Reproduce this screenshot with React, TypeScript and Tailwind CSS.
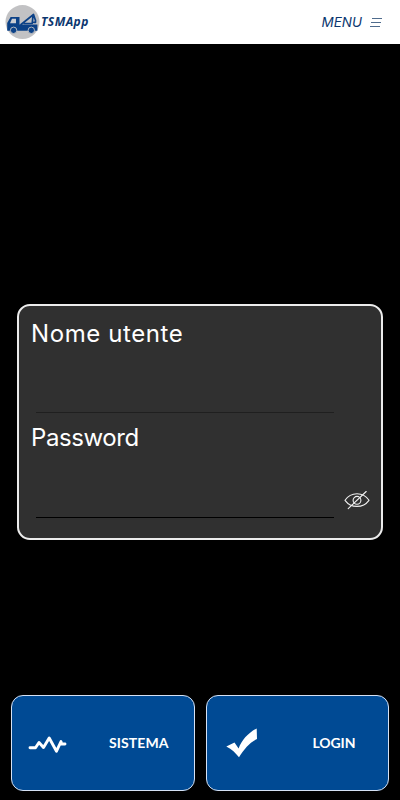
import React from "react";

const TruckLogo: React.FC = () => (
  <svg className="w-[35px] h-[35px] shrink-0" viewBox="0 0 35 35">
    <circle cx="17.5" cy="17.1" r="17" fill="#c2c2c4" />
    <g fill="#0b4187">
      <path d="M5.6 12H14.5V19.500H32.400V25.800H2.200V18z" />
      <circle cx="8.600" cy="25.300" r="3.200" stroke="#c2c2c4" strokeWidth="0.900" />
      <circle cx="26.300" cy="25.300" r="3.200" stroke="#c2c2c4" strokeWidth="0.900" />
    </g>
    <path d="M5 18.200L7 13.700H11V18.200z" fill="#c9ccd2" />
    <path
      d="M16 19.500L28.500 9.500L30.500 15.500M19.500 18.500L27.200 18.500L28 10.500M30.500 15V17.300H28.800"
      fill="none"
      stroke="#0b4187"
      strokeWidth="1.700"
      strokeLinejoin="round"
      strokeLinecap="round"
    />
  </svg>
);

const MenuIcon: React.FC = () => (
  <svg className="w-3 h-[11px]" viewBox="0 0 12 11" fill="none" stroke="#3b5b80">
    <path d="M2 1.500h10M1 5.500h10M0 9.500h10" strokeWidth="0.900" />
  </svg>
);

const EyeOffIcon: React.FC = () => (
  <svg
    className="w-[26px] h-5"
    viewBox="0 0 26 20"
    fill="none"
    stroke="#f0f0f0"
    strokeWidth="1.100"
    strokeLinecap="round"
  >
    <path d="M1 10.300C7 1.600 19 1.600 25 10.300C19 18.400 7 18.400 1 10.300z" strokeLinejoin="round" />
    <circle cx="13" cy="10.300" r="3.900" />
    <path d="M22.200 1.500L4.200 18.600" />
  </svg>
);

const PulseIcon: React.FC = () => (
  <svg className="w-10 h-5" viewBox="0 0 40 20" fill="none" stroke="white">
    <path
      d="M2 14.800H7.500L11 9.500L15.500 14.500L21.200 5L28.500 18.200L33 8.500L33.500 11H37"
      strokeWidth="2.900"
      strokeLinecap="round"
      strokeLinejoin="round"
    />
  </svg>
);

const CheckIcon: React.FC = () => (
  <svg className="w-8 h-[30px]" viewBox="0 0 32 30" fill="white">
    <path d="M0.300 18.500L8.500 14.500L12.600 20.500C15.500 12.500 22 5 30.700 0.500L31 11C24 14.500 18.500 20.500 13 29.300C9.500 25 6 21 0.300 18.500z" />
  </svg>
);

const App: React.FC = () => {
  return (
    <div className="flex flex-col w-[400px] h-[800px] bg-black text-white">
      {/* Header */}
      <header className="flex items-center justify-between h-11 pl-[5px] pr-[18px] bg-white text-[#0b376f] shrink-0">
        <div className="flex items-center">
          <TruckLogo />
          <span className="ml-px text-[12px] leading-4 tracking-[0.45px] font-bold italic font-['Open_Sans',sans-serif]">
            TSMApp
          </span>
        </div>
        <button className="flex items-center gap-2">
          <span className="text-[13.5px] leading-4 italic font-['Inter',sans-serif]">MENU</span>
          <MenuIcon />
        </button>
      </header>

      {/* Login form */}
      <main className="mt-[260px] mx-[17px] h-[236px] shrink-0 rounded-[13px] border-2 border-[#ececec] bg-[#303030] pl-[13px] pr-[11px] font-['Inter',sans-serif]">
        <label className="block h-[104px] pt-[12px]">
          <span className="block -ml-px text-[24px] leading-8 tracking-[0.6px]">Nome utente</span>
          <input
            type="text"
            className="block w-[298px] ml-1 h-[63px] border-b border-[#1f1f1f] bg-transparent outline-none"
          />
        </label>
        <div className="flex justify-between">
          <label className="block pt-[12px]">
            <span className="block -ml-px text-[24px] leading-8 tracking-[-0.4px]">Password</span>
            <input
              type="password"
              className="block w-[298px] ml-1 h-[64px] border-b border-black bg-transparent outline-none"
            />
          </label>
          <button className="mt-[80px] h-5">
            <EyeOffIcon />
          </button>
        </div>
      </main>

      {/* Actions */}
      <footer className="grid grid-cols-2 gap-[11px] mt-[155px] mx-[11px] h-24 shrink-0 font-['Lato',sans-serif] text-[14px] font-bold">
        <button className="flex items-center rounded-[12px] border border-[#d5e1f4] bg-[#004a94] pl-4">
          <PulseIcon />
          <span className="ml-[41px] -mt-px tracking-[0.1px]">SISTEMA</span>
        </button>
        <button className="flex items-center rounded-[12px] border border-[#d5e1f4] bg-[#004a94] pl-[19px]">
          <CheckIcon />
          <span className="ml-[55px] -mt-px tracking-[-0.1px]">LOGIN</span>
        </button>
      </footer>
    </div>
  );
};

export default App;
